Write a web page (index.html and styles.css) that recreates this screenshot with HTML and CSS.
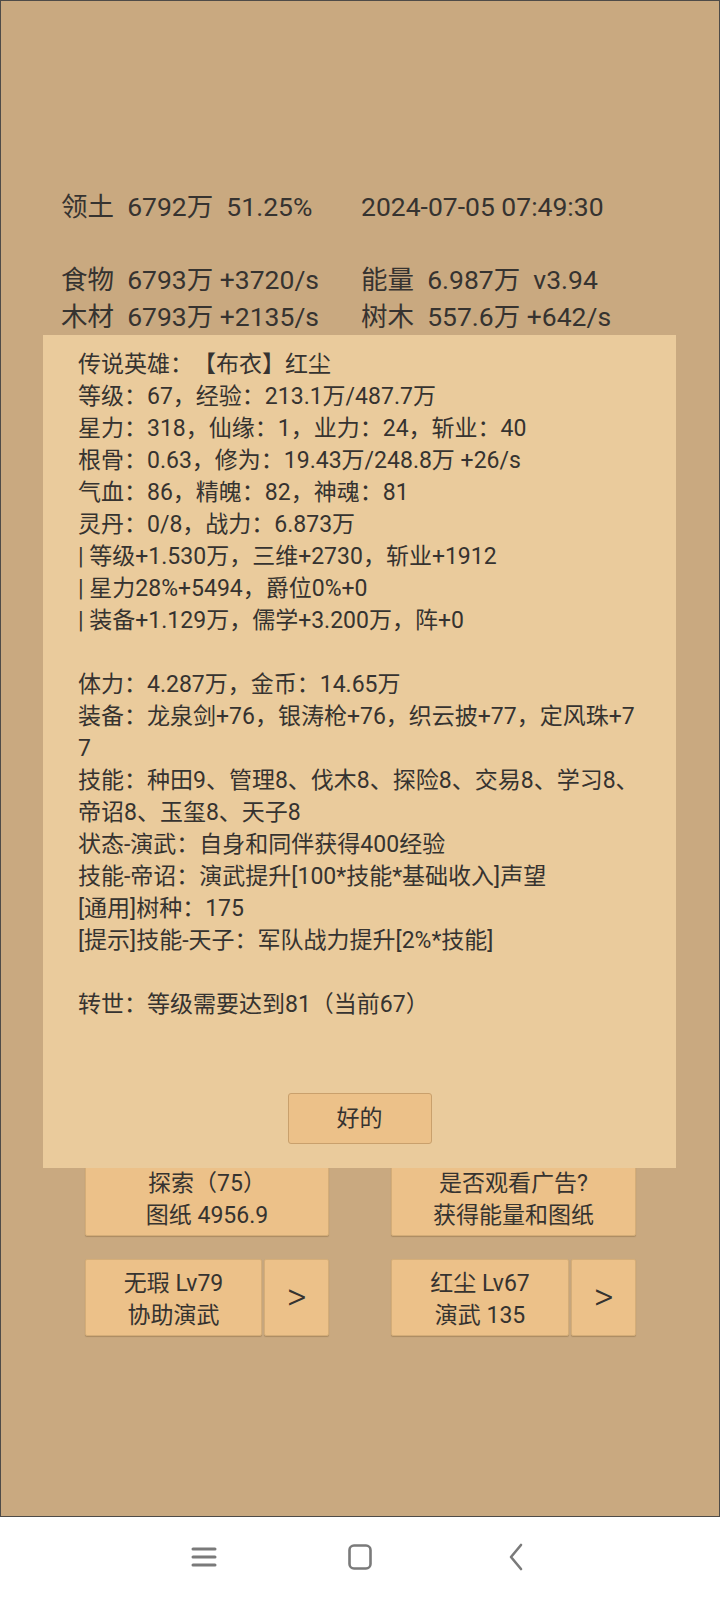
FILE: index.html
```html
<!DOCTYPE html>
<html lang="zh-CN">

<head>
    <meta charset="UTF-8">
    <meta name="viewport" content="width=device-width, initial-scale=1.0">
    <title>领土</title>
    <link rel="stylesheet" href="styles.css">
</head>

<body>
    <div class="app">
        <div class="stats">
            <div class="row">
                <div class="cell">领土  6792万  51.25%</div>
                <div class="cell right">2024-07-05 07:49:30</div>
            </div>
            <div class="row"></div>
            <div class="row">
                <div class="cell">食物  6793万 +3720/s</div>
                <div class="cell right">能量  6.987万  v3.94</div>
            </div>
            <div class="row">
                <div class="cell">木材  6793万 +2135/s</div>
                <div class="cell right">树木  557.6万 +642/s</div>
            </div>
        </div>

        <div class="actions">
            <button class="btn">探索（75）<br>图纸 4956.9</button>
            <button class="btn">是否观看广告?<br>获得能量和图纸</button>
            <div class="pair">
                <button class="btn">无瑕 Lv79<br>协助演武</button>
                <button class="btn arrow">&gt;</button>
            </div>
            <div class="pair">
                <button class="btn">红尘 Lv67<br>演武 135</button>
                <button class="btn arrow">&gt;</button>
            </div>
        </div>

        <div class="dialog">
            <div class="info">
                <div>传说英雄：【布衣】红尘</div>
                <div>等级：67，经验：213.1万/487.7万</div>
                <div>星力：318，仙缘：1，业力：24，斩业：40</div>
                <div>根骨：0.63，修为：19.43万/248.8万 +26/s</div>
                <div>气血：86，精魄：82，神魂：81</div>
                <div>灵丹：0/8，战力：6.873万</div>
                <div>| 等级+1.530万，三维+2730，斩业+1912</div>
                <div>| 星力28%+5494，爵位0%+0</div>
                <div>| 装备+1.129万，儒学+3.200万，阵+0</div>
                <div class="blank"></div>
                <div>体力：4.287万，金币：14.65万</div>
                <div>装备：龙泉剑+76，银涛枪+76，织云披+77，定风珠+77</div>
                <div>技能：种田9、管理8、伐木8、探险8、交易8、学习8、帝诏8、玉玺8、天子8</div>
                <div>状态-演武：自身和同伴获得400经验</div>
                <div>技能-帝诏：演武提升[100*技能*基础收入]声望</div>
                <div>[通用]树种：175</div>
                <div>[提示]技能-天子：军队战力提升[2%*技能]</div>
                <div class="blank"></div>
                <div>转世：等级需要达到81（当前67）</div>
            </div>
            <button class="btn ok">好的</button>
        </div>
    </div>

    <nav class="navbar">
        <svg width="28" height="28" viewBox="0 0 28 28">
            <path d="M3 6h22M3 14h22M3 22h22" stroke="#7a7a7a" stroke-width="3" stroke-linecap="round" fill="none"/>
        </svg>
        <svg width="28" height="28" viewBox="0 0 28 28">
            <rect x="3.5" y="2.5" width="21" height="23" rx="4.5" stroke="#7a7a7a" stroke-width="2.6" fill="none"/>
        </svg>
        <svg width="28" height="28" viewBox="0 0 28 28">
            <path d="M19 2L9 14l10 12" stroke="#7a7a7a" stroke-width="2.6" stroke-linecap="round" stroke-linejoin="round" fill="none"/>
        </svg>
    </nav>
</body>

</html>
```

FILE: styles.css
```css
body {
    margin: 0;
    padding: 0;
    width: 720px;
    height: 1600px;
    background: #ffffff;
    font-family: Roboto, "Noto Sans CJK SC", sans-serif;
    color: #363330;
    text-spacing-trim: space-all;
}

.app {
    position: relative;
    box-sizing: border-box;
    height: 1517px;
    background-color: #c9a980;
    border: 1px solid #4e4b48;
}

.stats {
    padding: 188px 0 0 60px;
    font-size: 26.5px;
    line-height: 36.5px;
}

.row {
    display: flex;
    height: 36.5px;
    white-space: pre;
}

.cell {
    width: 300px;
}

.cell.right {
    width: auto;
}

.actions {
    display: grid;
    grid-template-columns: 244px 245px;
    column-gap: 62px;
    row-gap: 23px;
    margin-top: 824px;
    padding-left: 84px;
}

.btn {
    font-family: Roboto, "Noto Sans CJK SC", sans-serif;
    font-size: 23px;
    line-height: 31.5px;
    color: #363330;
    background-color: #ecc189;
    border: 1px solid #d4ad78;
    border-radius: 2px;
    box-shadow: 0 1px 1px rgba(80, 50, 10, 0.25);
    padding: 4px 0 0;
    height: 77px;
}

.pair {
    display: flex;
    gap: 2px;
}

.pair .btn {
    flex: 1;
}

.pair .arrow {
    flex: 0 0 65px;
    font-size: 38px;
    font-weight: 300;
    padding: 0;
}

.dialog {
    position: absolute;
    top: 334px;
    left: 42px;
    width: 633px;
    height: 833px;
    box-sizing: border-box;
    padding: 14px 35px 24px;
    background-color: #eacb9c;
    display: flex;
    flex-direction: column;
}

.info {
    font-size: 23px;
    line-height: 32px;
    word-break: break-all;
}

.blank {
    height: 32px;
}

.ok {
    margin: auto auto 0;
    width: 144px;
    height: 51px;
    padding: 0;
    font-size: 23px;
    border-radius: 3px;
    border-color: #c9a06c;
    box-shadow: none;
}

.navbar {
    height: 83px;
    display: flex;
    justify-content: center;
    align-items: center;
    gap: 128px;
    padding-bottom: 4px;
    box-sizing: border-box;
}
```
